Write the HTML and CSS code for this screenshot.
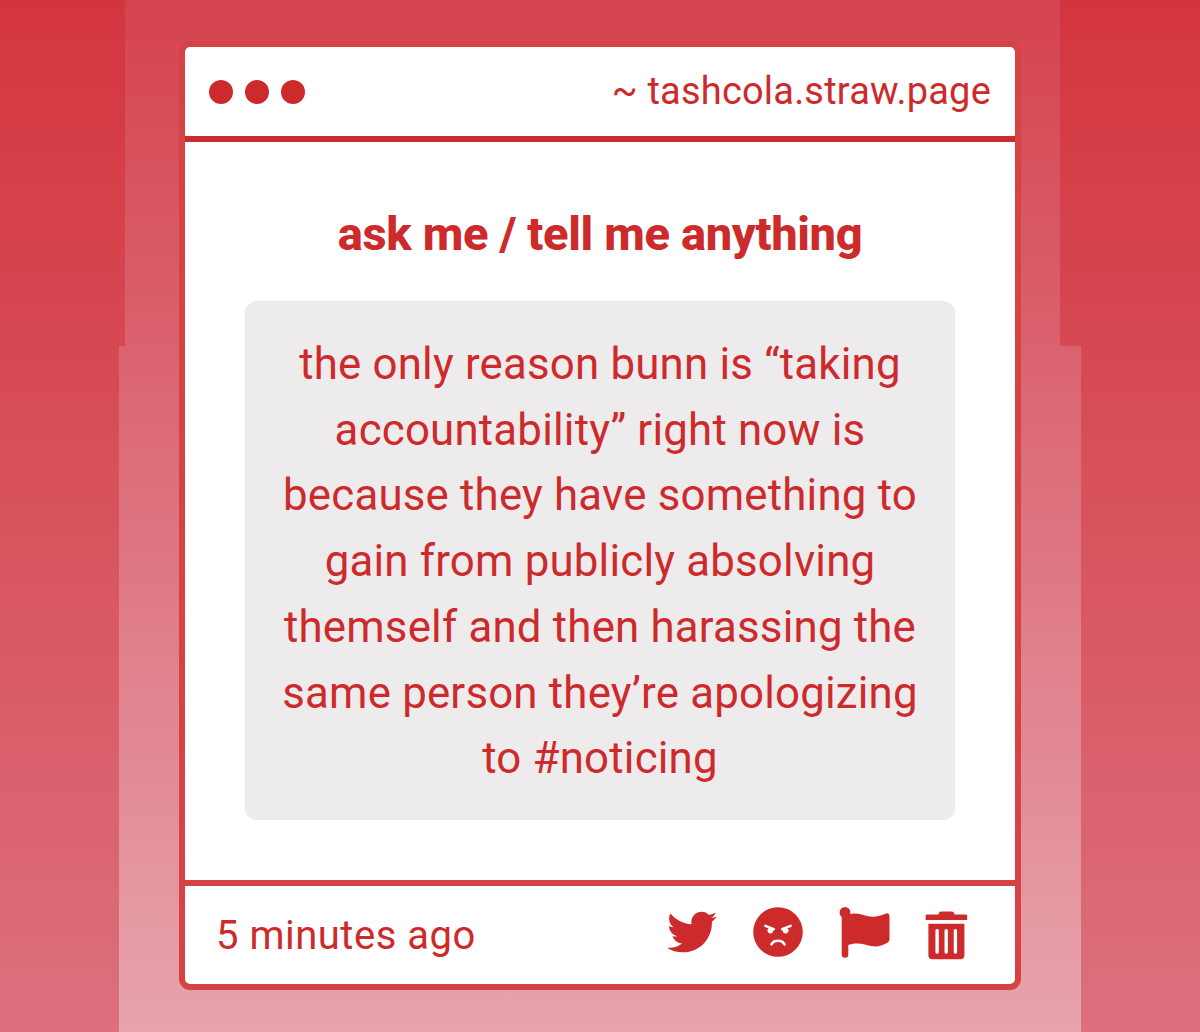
FILE: index.html
```html
<!DOCTYPE html>
<html lang="en">
<head>
    <meta charset="UTF-8">
    <meta name="viewport" content="width=device-width, initial-scale=1.0">
    <title>tashcola.straw.page</title>
    <link rel="stylesheet" href="styles.css">
</head>
<body>
    <main class="card">
        <header class="card-header">
            <div class="dots">
                <span class="dot"></span>
                <span class="dot"></span>
                <span class="dot"></span>
            </div>
            <span class="site">~ tashcola.straw.page</span>
        </header>
        <section class="card-body">
            <h1>ask me / tell me anything</h1>
            <p class="message">
                the only reason bunn is “taking<br>
                accountability” right now is<br>
                because they have something to<br>
                gain from publicly absolving<br>
                themself and then harassing the<br>
                same person they’re apologizing<br>
                to #noticing
            </p>
        </section>
        <footer class="card-footer">
            <span class="time">5 minutes ago</span>
            <div class="actions">
                <svg class="icon" viewBox="0 0 512 512">
                    <path d="M459.37 151.716c.325 4.548.325 9.097.325 13.645 0 138.72-105.583 298.558-298.558 298.558-59.452 0-114.68-17.219-161.137-47.106 8.447.974 16.568 1.299 25.34 1.299 49.055 0 94.213-16.568 130.274-44.832-46.132-.975-84.792-31.188-98.112-72.772 6.498.974 12.995 1.624 19.818 1.624 9.421 0 18.843-1.3 27.614-3.573-48.081-9.747-84.143-51.98-84.143-102.985v-1.299c13.969 7.797 30.214 12.67 47.431 13.319-28.264-18.843-46.781-51.005-46.781-87.391 0-19.492 5.197-37.36 14.294-52.954 51.655 63.675 129.3 105.258 216.365 109.807-1.624-7.797-2.599-15.918-2.599-24.04 0-57.828 46.782-104.934 104.934-104.934 30.213 0 57.502 12.67 76.67 33.137 23.715-4.548 46.456-13.32 66.599-25.34-7.798 24.366-24.366 44.833-46.132 57.827 21.117-2.273 41.584-8.122 60.426-16.243-14.292 20.791-32.161 39.308-52.628 54.253z"/>
                </svg>
                <svg class="icon" viewBox="0 0 50 50">
                    <circle cx="25" cy="25" r="24.8"/>
                    <g class="face">
                        <path d="M12.400 18.800l8.400 3.400M37.600 18.800l-8.400 3.400M18.400 37.400c2.400-4.800 10.800-4.800 13.200 0"/>
                        <circle cx="17.400" cy="23.600" r="2.500"/>
                        <circle cx="32.600" cy="23.600" r="2.500"/>
                    </g>
                </svg>
                <svg class="icon" viewBox="0 0 50 50">
                    <circle cx="6" cy="5.4" r="5.4"/>
                    <path d="M2.7 6h6.6v1.6c8-2.8 14 .4 20 1.6 7 1.400 12-.8 17.800-2.800 1.900-.4 3.400.6 3.400 2.400v23.800c0 1.400-.6 2.200-1.800 2.800-4.400 2.400-9.400 5-16.200 3.700-6-1.100-13-4.700-23.200-1.100v9.400a3.300 3.300 0 0 1-6.600 0z"/>
                </svg>
                <svg class="icon trash" viewBox="0 0 44 50">
                    <path d="M2 7.6h11.5c.4-2 1-3 3-3h10c2 0 2.600 1 3 3H41q1.200 0 1.200 1.200V13H.6V8.800Q.6 7.600 2 7.600z"/>
                    <path fill-rule="evenodd" d="M3.400 16.700h36v31.600q0 4-4 4h-28q-4 0-4-4zM10.400 23.700v21.300a1.700 1.700 0 0 0 3.400 0V23.700a1.700 1.700 0 0 0-3.400 0zM19.500 23.700v21.300a1.700 1.700 0 0 0 3.400 0V23.700a1.700 1.700 0 0 0-3.400 0zM28.700 23.700v21.300a1.700 1.700 0 0 0 3.400 0V23.700a1.700 1.700 0 0 0-3.400 0z"/>
                </svg>
            </div>
        </footer>
    </main>
</body>
</html>
```

FILE: styles.css
```css
* {
    box-sizing: border-box;
}

body {
    margin: 0;
    padding: 41px 0 0 179px;
    height: 1032px;
    overflow: hidden;
    font-family: Roboto, sans-serif;
    color: #cd2a2c;
    /* narrow strip on top, slightly wider one below, over the page gradient */
    background:
        linear-gradient(#d5434f, #da626e) 125px 0 / 935px 346px no-repeat,
        linear-gradient(#da636f, #e7a4ad) 119px 346px / 962px 686px no-repeat,
        linear-gradient(#d3353d, #dc707d);
}

.card {
    display: flex;
    flex-direction: column;
    width: 842px;
    height: 949px;
    background-color: white;
    border: 6px solid #d64345;
    border-radius: 11px;
}

.card-header {
    display: flex;
    justify-content: space-between;
    align-items: center;
    height: 95px;
    padding: 0 24px;
    border-bottom: 6px solid #cb2c2f;
}

.dots {
    display: flex;
    gap: 12px;
}

.dot {
    width: 24px;
    height: 24px;
    border-radius: 50%;
    background-color: #cd2a2c;
}

.site {
    padding-bottom: 2px;
    font-size: 38px;
    letter-spacing: 0.2px;
}

.card-body {
    flex: 1;
    padding: 59px 60px 60px;
    text-align: center;
}

h1 {
    margin: 0 0 34px;
    font-size: 47px;
    line-height: 66px;
    font-weight: 800;
    letter-spacing: -0.35px;
}

.message {
    margin: 0;
    padding: 31px 0 28px;
    font-size: 43.8px;
    line-height: 65.7px;
    letter-spacing: 0.2px;
    white-space: nowrap;
    background-color: #edebec;
    border-radius: 12px;
}

.card-footer {
    display: flex;
    justify-content: space-between;
    align-items: center;
    height: 104px;
    padding: 0 46px 6px 31px;
    border-top: 6px solid #d64345;
}

.time {
    padding-top: 6px;
    font-size: 40px;
    letter-spacing: 0.5px;
}

.actions {
    display: flex;
    gap: 36px;
}

.icon {
    width: 50px;
    height: 50px;
    overflow: visible;
    fill: #cd2a2c;
}

.trash {
    width: 44px;
}

.face {
    fill: white;
    stroke: white;
    stroke-width: 2.5;
    stroke-linecap: round;
}

.face path {
    fill: none;
}

.face circle {
    stroke-width: 1;
}
```
